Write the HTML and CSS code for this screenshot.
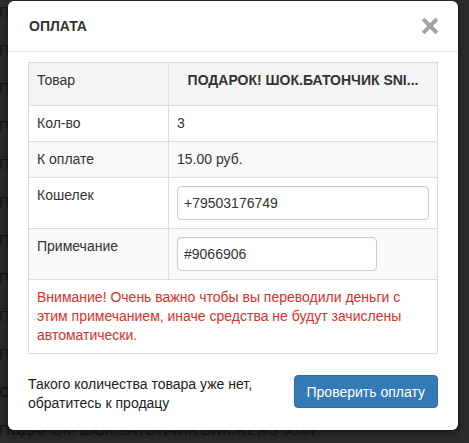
FILE: index.html
```html
<!DOCTYPE html>
<html lang="ru">
<head>
    <meta charset="UTF-8">
    <title>Оплата</title>
    <link rel="stylesheet" href="styles.css">
</head>
<body>

    <!-- Список товаров под затемнением -->
    <ul class="goods">
        <li>ПОДАРОК! ШОК.БАТОНЧИК SNICKERS 50.0Г</li>
        <li>ПОДАРОК! ШОК.БАТОНЧИК SNICKERS 50.0Г</li>
        <li>ПОДАРОК! ШОК.БАТОНЧИК SNICKERS 50.0Г</li>
        <li>ПОДАРОК! ШОК.БАТОНЧИК SNICKERS 50.0Г</li>
        <li>ПОДАРОК! ШОК.БАТОНЧИК SNICKERS 50.0Г</li>
        <li>ПОДАРОК! ШОК.БАТОНЧИК SNICKERS 50.0Г</li>
        <li>ПОДАРОК! ШОК.БАТОНЧИК SNICKERS 50.0Г</li>
        <li>ПОДАРОК! ШОК.БАТОНЧИК SNICKERS 50.0Г</li>
        <li>ПОДАРОК! ШОК.БАТОНЧИК SNICKERS 50.0Г</li>
        <li>ПОДАРОК! ШОК.БАТОНЧИК SNICKERS 50.0Г</li>
        <li>СКИДКА! ШОК.БАТОНЧИК TWIX 55.0Г</li>
        <li>ПОДАРОК! ШОК.БАТОНЧИК SNICKERS 50.0Г</li>
    </ul>

    <!-- Окно оплаты -->
    <div class="modal">
        <div class="modal-header">
            <h4 class="modal-title">ОПЛАТА</h4>
            <button class="close" type="button">
                <svg width="16" height="16" viewBox="0 0 16 16">
                    <path d="M2.5 2.5 L13.5 13.5 M13.5 2.5 L2.5 13.5" stroke="#a3a3a3" stroke-width="4" stroke-linecap="square"/>
                </svg>
            </button>
        </div>

        <div class="modal-body">
            <table class="pay-table">
                <colgroup>
                    <col class="col-name">
                    <col>
                </colgroup>
                <thead>
                    <tr>
                        <th>Товар</th>
                        <th class="product">ПОДАРОК! ШОК.БАТОНЧИК SNI...</th>
                    </tr>
                </thead>
                <tbody>
                    <tr>
                        <td>Кол-во</td>
                        <td>3</td>
                    </tr>
                    <tr class="odd">
                        <td>К оплате</td>
                        <td>15.00 руб.</td>
                    </tr>
                    <tr>
                        <td>Кошелек</td>
                        <td><input type="text" class="field" value="+79503176749" readonly></td>
                    </tr>
                    <tr class="odd">
                        <td>Примечание</td>
                        <td><input type="text" class="field field-short" value="#9066906" readonly></td>
                    </tr>
                    <tr>
                        <td colspan="2" class="warning">Внимание! Очень важно чтобы вы переводили деньги с этим примечанием, иначе средства не будут зачислены автоматически.</td>
                    </tr>
                </tbody>
            </table>
        </div>

        <div class="modal-footer">
            <p class="notice">Такого количества товара уже нет,<br>обратитесь к продацу</p>
            <button class="btn-check" type="button">Проверить оплату</button>
        </div>
    </div>

</body>
</html>
```

FILE: styles.css
```css
/* Общие настройки */
body {
    margin: 0;
    background-color: #2c2c2c;
    font-family: "Liberation Sans", Arial, sans-serif;
    font-size: 14px;
    line-height: 19px;
    color: #333;
    overflow: hidden;
}

/* Страница под затемнением */
.goods {
    list-style: none;
    margin: -7px 0 0 -1px;
    padding: 0;
    color: #161616;
    font-size: 15px;
}

.goods li {
    line-height: 38px;
    white-space: nowrap;
}

/* Модальное окно */
.modal {
    position: absolute;
    top: 1px;
    left: 8px;
    width: 450px;
    background-color: #fff;
    border-radius: 6px;
    box-shadow: 0 3px 9px rgba(0, 0, 0, 0.5);
}

.modal-header {
    display: flex;
    justify-content: space-between;
    align-items: center;
    padding: 15px 20px 15px 21px;
    border-bottom: 1px solid #e5e5e5;
}

.modal-title {
    margin: 0;
    font-size: 14px;
    line-height: 20px;
    font-weight: bold;
    color: #333;
}

.close {
    display: flex;
    padding: 0;
    border: none;
    background: none;
    cursor: pointer;
}

.modal-body {
    padding: 10px 20px 20px;
}

/* Таблица с данными платежа */
.pay-table {
    width: 100%;
    border-collapse: collapse;
    table-layout: fixed;
}

.col-name {
    width: 140px;
}

.pay-table th,
.pay-table td {
    border: 1px solid #ddd;
    padding: 8px;
    text-align: left;
    vertical-align: top;
}

.pay-table th {
    padding-bottom: 15px;
    background-color: #f4f4f4;
    font-weight: normal;
}

.pay-table th.product {
    text-align: center;
    font-weight: bold;
    white-space: nowrap;
    overflow: hidden;
}

.pay-table tr.odd td {
    background-color: #f9f9f9;
}

.field {
    display: block;
    box-sizing: border-box;
    width: 100%;
    height: 34px;
    padding: 6px;
    border: 1px solid #ccc;
    border-radius: 4px;
    background-color: #fff;
    font-family: inherit;
    font-size: 14px;
    color: #333;
    box-shadow: inset 0 1px 1px rgba(0, 0, 0, 0.05);
}

.field-short {
    width: 200px;
}

.pay-table td.warning {
    color: #d9302c;
}

/* Нижняя часть окна */
.modal-footer {
    display: flex;
    justify-content: space-between;
    align-items: flex-start;
    padding: 1px 20px 17px;
}

.notice {
    margin: 0;
    color: #222;
}

.btn-check {
    height: 33px;
    padding: 6px 12px;
    border: 1px solid #2e6da4;
    border-radius: 4px;
    background-color: #337ab7;
    color: #fff;
    font-family: inherit;
    font-size: 14px;
    cursor: pointer;
}
```
